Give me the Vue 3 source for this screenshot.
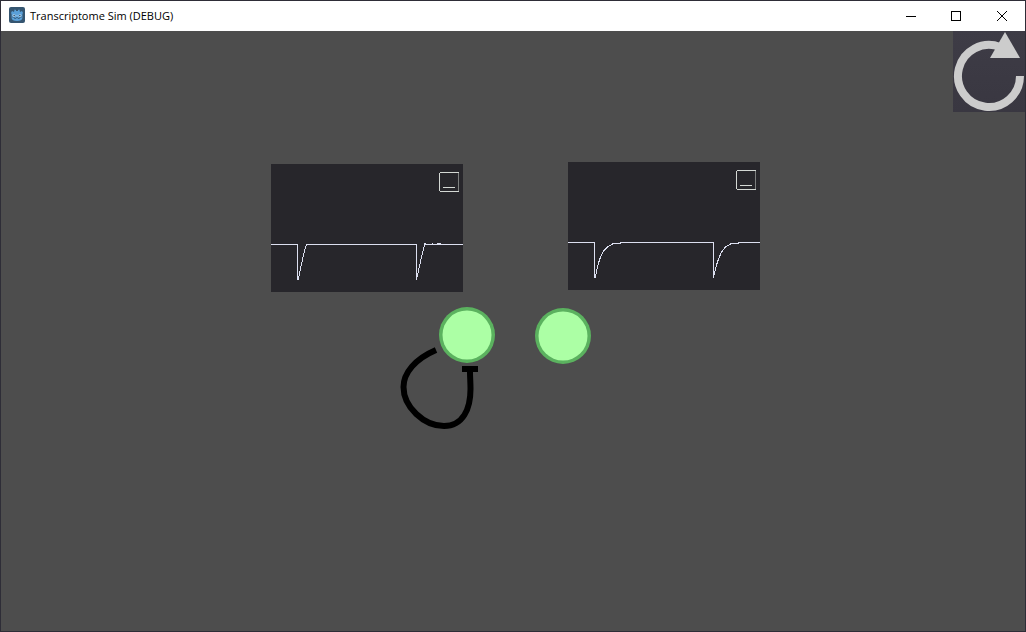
<script setup>
const nodes = [
  { id: 'a', label: 'Gene A', cls: 'node-a' },
  { id: 'b', label: 'Gene B', cls: 'node-b' }
]
const graphs = [
  {
    id: 'a',
    cls: 'graph-a',
    label: 'Expression of gene A',
    line: 'M0 80.5H26.5V115.5H27.5L28.5 109L30.5 100L32.5 91L34.5 83L35.5 80.5H145.5V115.5L146.5 111L148.5 102L150.5 93L152.5 85L154 79.5L155 80.5H192M161 79.5h1M166 79.5h4'
  },
  {
    id: 'b',
    cls: 'graph-b',
    label: 'Expression of gene B',
    line: 'M0 80.5H26.5V115.5H27.5L28.5 109L30.5 101L32.5 95L35.5 89L39.5 85L44.5 82L48.5 81.5H52L53 80.5H145.5V115.5L146.5 111L148.5 103L150.5 97L153.5 90L157.5 85L162.5 82L166.5 81.5H170L171 80.5H192'
  }
]
</script>

<template>
  <div class="window">
    <header class="titlebar">
      <svg class="app-icon" viewBox="0 0 16 16" aria-hidden="true">
        <rect width="16" height="16" rx="2" fill="#355570" />
        <path d="M2 6l1-2 2 1 .6-2.4L7 3v1h2V3l1.4-.4L11 5l2-1 1 2-.6 1v4c0 2-2.4 3-5.4 3s-5.4-1-5.4-3V7z" fill="#5aa0d8" />
        <path d="M3 10h2l.5 1.5h1.5l.3-1h1.4l.3 1h1.5L11 10h2" fill="none" stroke="#355570" stroke-width=".7" />
        <circle cx="5" cy="8.5" r="1.5" fill="#a9cdea" />
        <circle cx="11" cy="8.5" r="1.5" fill="#a9cdea" />
        <circle cx="5.2" cy="8.5" r=".8" fill="#355570" />
        <circle cx="10.8" cy="8.5" r=".8" fill="#355570" />
        <path d="M8 8v1.5" stroke="#a9cdea" />
      </svg>
      <h1 class="title">Transcriptome Sim (DEBUG)</h1>
      <div class="controls">
        <button type="button" aria-label="Minimize">
          <svg viewBox="0 0 12 12"><path d="M2 6.5h10" /></svg>
        </button>
        <button type="button" aria-label="Maximize">
          <svg viewBox="0 0 12 12"><path d="M1.5 1.5h9v9h-9z" /></svg>
        </button>
        <button type="button" aria-label="Close">
          <svg class="smooth" viewBox="0 0 12 12"><path d="M1 1l10 10M11 1L1 11" /></svg>
        </button>
      </div>
    </header>

    <main class="canvas">
      <button type="button" class="restart" aria-label="Restart">
        <svg viewBox="0 0 72 81">
          <path d="M67 45A31 31 0 1 1 47 16" fill="none" stroke="#ccc" stroke-width="8" />
          <path d="M52 1L67 27H37z" fill="#ccc" />
        </svg>
      </button>

      <section v-for="g in graphs" :key="g.id" class="graph" :class="g.cls" :aria-label="g.label">
        <svg class="plot" viewBox="0 0 192 128"><path :d="g.line" /></svg>
        <button type="button" class="collapse" aria-label="Collapse graph">
          <svg viewBox="0 0 20 20">
            <path d="M1 .5h19M1 19.5h19M.5 1v18" />
            <path d="M19.5 1v18" opacity=".5" />
            <path d="M4 15.5h12" />
          </svg>
        </button>
      </section>

      <svg class="link" viewBox="0 0 84 90" aria-hidden="true">
        <path d="M36 10C15 19 3.5 33 3.5 47C3.5 67 24 86 44 86C63 86 70.5 69 70.5 49C70.5 43 70 37 70 32" />
        <path d="M62 29h16" />
      </svg>
      <button v-for="n in nodes" :key="n.id" type="button" class="node" :class="n.cls" :aria-label="n.label">
        <svg viewBox="0 0 56 56">
          <circle cx="28" cy="28" r="28" fill="#5bb25f" />
          <circle cx="28" cy="28" r="24.5" fill="#acffa5" />
        </svg>
      </button>
    </main>
  </div>
</template>

<style>
body {
  background: #4d4d4d;
}
</style>

<style scoped>
.window {
  box-sizing: border-box;
  min-height: 100vh;
  display: flex;
  flex-direction: column;
  border: 1px solid #2e2d37;
  font-family: "Open Sans", "Noto Sans", sans-serif;
}
button {
  padding: 0;
  border: 0;
  background: none;
}
svg {
  display: block;
}
.titlebar {
  display: flex;
  align-items: center;
  height: 30px;
  padding-left: 8px;
  background: #fff;
}
.app-icon {
  width: 16px;
  height: 16px;
  margin-bottom: 2px;
}
.title {
  margin: 0 0 0 5px;
  font-size: 11px;
  line-height: 16px;
  font-weight: 400;
  color: #000;
}
.controls {
  display: flex;
  margin-left: auto;
}
.controls button {
  display: flex;
  align-items: center;
  justify-content: center;
  width: 46px;
  height: 28px;
}
.controls svg {
  width: 12px;
  height: 12px;
  fill: none;
  stroke: #000;
  shape-rendering: crispEdges;
}
.controls .smooth {
  shape-rendering: auto;
}
.canvas {
  position: relative;
  flex: 1;
  overflow: hidden;
  background: #4d4d4d;
}
.restart {
  position: absolute;
  top: 0;
  right: 0;
  width: 72px;
  height: 81px;
  background: linear-gradient(#3e3c46, #393741);
}
.graph {
  position: absolute;
  width: 192px;
  height: 128px;
  background: #27262b;
}
.graph-a {
  left: 270px;
  top: 133px;
}
.graph-b {
  left: 567px;
  top: 131px;
}
.plot path {
  fill: none;
  stroke: #dcdff0;
  shape-rendering: crispEdges;
}
.collapse {
  position: absolute;
  top: 8px;
  right: 4px;
  width: 20px;
  height: 20px;
}
.collapse path {
  fill: none;
  stroke: #d4d8d4;
  shape-rendering: crispEdges;
}
.node {
  position: absolute;
  width: 56px;
  height: 56px;
  border-radius: 50%;
}
.node-a {
  left: 438px;
  top: 276px;
}
.node-b {
  left: 534px;
  top: 277px;
}
.link {
  position: absolute;
  left: 399px;
  top: 309px;
  width: 84px;
  height: 90px;
}
.link path {
  fill: none;
  stroke: #000;
  stroke-width: 6;
}
</style>
